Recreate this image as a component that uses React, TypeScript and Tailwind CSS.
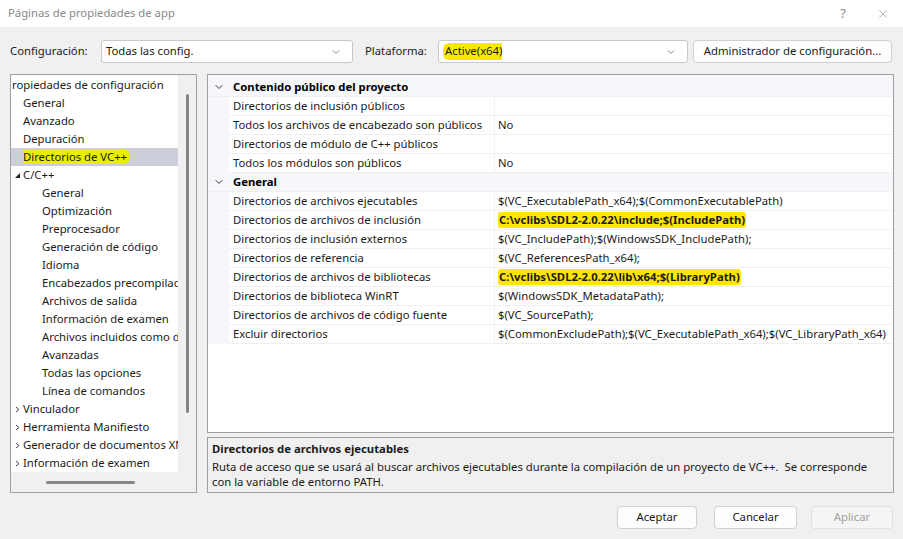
import { ChevronDown, X } from "lucide-react";

const font = { fontFamily: '"Noto Sans", "Open Sans", sans-serif' };

type Row = { name: string; value?: string; mark?: boolean };

const publicRows: Row[] = [
  { name: "Directorios de inclusión públicos" },
  { name: "Todos los archivos de encabezado son públicos", value: "No" },
  { name: "Directorios de módulo de C++ públicos" },
  { name: "Todos los módulos son públicos", value: "No" },
];

const generalRows: Row[] = [
  { name: "Directorios de archivos ejecutables", value: "$(VC_ExecutablePath_x64);$(CommonExecutablePath)" },
  { name: "Directorios de archivos de inclusión", value: "C:\\vclibs\\SDL2-2.0.22\\include;$(IncludePath)", mark: true },
  { name: "Directorios de inclusión externos", value: "$(VC_IncludePath);$(WindowsSDK_IncludePath);" },
  { name: "Directorios de referencia", value: "$(VC_ReferencesPath_x64);" },
  { name: "Directorios de archivos de bibliotecas", value: "C:\\vclibs\\SDL2-2.0.22\\lib\\x64;$(LibraryPath)", mark: true },
  { name: "Directorios de biblioteca WinRT", value: "$(WindowsSDK_MetadataPath);" },
  { name: "Directorios de archivos de código fuente", value: "$(VC_SourcePath);" },
  { name: "Excluir directorios", value: "$(CommonExcludePath);$(VC_ExecutablePath_x64);$(VC_LibraryPath_x64)" },
];

const tree: { label: string; level: number; icon?: "open" | "closed"; selected?: boolean }[] = [
  { label: "ropiedades de configuración", level: 0 },
  { label: "General", level: 1 },
  { label: "Avanzado", level: 1 },
  { label: "Depuración", level: 1 },
  { label: "Directorios de VC++", level: 1, selected: true },
  { label: "C/C++", level: 1, icon: "open" },
  { label: "General", level: 2 },
  { label: "Optimización", level: 2 },
  { label: "Preprocesador", level: 2 },
  { label: "Generación de código", level: 2 },
  { label: "Idioma", level: 2 },
  { label: "Encabezados precompilados", level: 2 },
  { label: "Archivos de salida", level: 2 },
  { label: "Información de examen", level: 2 },
  { label: "Archivos incluidos como dependencias", level: 2 },
  { label: "Avanzadas", level: 2 },
  { label: "Todas las opciones", level: 2 },
  { label: "Línea de comandos", level: 2 },
  { label: "Vinculador", level: 1, icon: "closed" },
  { label: "Herramienta Manifiesto", level: 1, icon: "closed" },
  { label: "Generador de documentos XML", level: 1, icon: "closed" },
  { label: "Información de examen", level: 1, icon: "closed" },
];

function Select({ value, width, mark }: { value: string; width: string; mark?: boolean }) {
  return (
    <div className={`${width} h-[23px] bg-white border border-[#c8c8c8] rounded-[3px] flex items-center justify-between pl-[4px] pr-[10px]`}>
      <span className={mark ? "bg-[#f7ea00] pl-[2px] rounded-l-[6px]" : ""}>{value}</span>
      <ChevronDown className="w-[12px] h-[12px] text-[#606060]" strokeWidth={1.5} />
    </div>
  );
}

function Category({ title }: { title: string }) {
  return (
    <div className="flex h-[19px] bg-[#f5f7fa] items-center border-b border-[#f0f0f0]">
      <div className="w-[21px] flex justify-center">
        <ChevronDown className="w-[12px] h-[12px] text-[#333]" strokeWidth={2} />
      </div>
      <span className="pl-[4px] font-bold text-black">{title}</span>
    </div>
  );
}

function PropRow({ row }: { row: Row }) {
  return (
    <div className="flex h-[19px]">
      <div className="w-[21px] bg-[#f5f7fa]" />
      <div className="w-[266px] bg-white border-b border-r border-[#f0f0f0] pl-[4px] flex items-center whitespace-nowrap overflow-hidden">
        {row.name}
      </div>
      <div className="flex-1 bg-white border-b border-[#f0f0f0] pl-[3px] flex items-center whitespace-nowrap overflow-hidden">
        {row.mark ? (
          <span className="bg-[#ffe600] font-bold px-[1px] rounded-[3px]">{row.value}</span>
        ) : (
          row.value
        )}
      </div>
    </div>
  );
}

export default function App() {
  return (
    <div className="w-[903px] h-[539px] bg-[#f0f0f0] flex flex-col text-[11.3px] text-[#1a1a1a] overflow-hidden" style={font}>
      {/* Title bar */}
      <div className="h-[27px] bg-white flex items-center justify-between pl-[8px] pr-[13px]">
        <span className="text-[#8a8a8a]">Páginas de propiedades de app</span>
        <div className="flex items-center gap-[30px] text-[#8a8a8a]">
          <span className="text-[13px]">?</span>
          <X className="w-[14px] h-[14px]" strokeWidth={1} />
        </div>
      </div>

      {/* Configuration row */}
      <div className="flex items-center mt-[13px] pl-[10px] h-[23px]">
        <span className="w-[91px]">Configuración:</span>
        <Select value="Todas las config." width="w-[252px]" />
        <span className="ml-[12px] w-[73px]">Plataforma:</span>
        <Select value="Active(x64)" width="w-[250px]" mark />
        <button className="ml-[5px] w-[199px] h-[23px] bg-[#fdfdfd] border border-[#d0d0d0] rounded-[4px] text-center">
          Administrador de configuración...
        </button>
      </div>

      {/* Main area */}
      <div className="flex mt-[11px] ml-[10px] gap-[10px] h-[419px]">
        {/* Tree */}
        <div className="w-[187px] border border-[#a0a0a0] bg-white flex flex-col">
          <div className="flex flex-1 min-h-0">
            <div className="w-[167px] overflow-hidden pt-[1px]">
              {tree.map((t, i) => (
                <div
                  key={i}
                  className={`h-[18px] flex items-center whitespace-nowrap ${t.selected ? "bg-[#ccceda]" : ""}`}
                >
                  <div className="w-[12px] flex justify-center shrink-0">
                    {t.icon === "open" && (
                      <svg width="5" height="5" viewBox="0 0 5 5"><polygon points="5,0 5,5 0,5" fill="#222" /></svg>
                    )}
                    {t.icon === "closed" && (
                      <svg width="5" height="7" viewBox="0 0 5 7"><polyline points="1,1 4,3.5 1,6" fill="none" stroke="#444" strokeWidth="1" /></svg>
                    )}
                  </div>
                  <span className={t.level === 0 ? "-ml-[11px]" : t.level === 1 ? "" : "pl-[19px]"}>
                    {t.selected ? <span className="bg-[#e8ee00] pr-[3px] rounded-r-[6px]">{t.label}</span> : t.label}
                  </span>
                </div>
              ))}
            </div>
            <div className="w-[18px] bg-[#f0f0f0] flex justify-center pt-[19px]">
              <div className="w-[3px] h-[319px] bg-[#858585] rounded-full" />
            </div>
          </div>
          <div className="h-[20px] bg-[#f0f0f0] flex items-center pl-[35px]">
            <div className="w-[89px] h-[3px] bg-[#858585] rounded-full" />
          </div>
        </div>

        {/* Property grid + description */}
        <div className="w-[687px] flex flex-col gap-[4px]">
          <div className="h-[360px] border border-[#a0a0a0] flex flex-col pt-[3px] bg-[#f5f7fa]">
            <Category title="Contenido público del proyecto" />
            {publicRows.map((r, i) => <PropRow key={i} row={r} />)}
            <Category title="General" />
            {generalRows.map((r, i) => <PropRow key={i} row={r} />)}
            <div className="flex-1 bg-white" />
          </div>
          <div className="h-[56px] border border-[#a0a0a0] bg-[#f0f0f0] px-[4px] pt-[3px] leading-[15px]">
            <div className="font-bold">Directorios de archivos ejecutables</div>
            <div className="mt-[3px] text-[11.3px]">
              Ruta de acceso que se usará al buscar archivos ejecutables durante la compilación de un proyecto de VC++.&nbsp; Se corresponde con la variable de entorno PATH.
            </div>
          </div>
        </div>
      </div>

      {/* Buttons */}
      <div className="flex justify-end mt-[13px] pr-[10px]">
        <button className="w-[80px] h-[23px] bg-[#fdfdfd] border border-[#d0d0d0] rounded-[4px]">Aceptar</button>
        <button className="ml-[17px] w-[83px] h-[23px] bg-[#fdfdfd] border border-[#d0d0d0] rounded-[4px]">Cancelar</button>
        <button className="ml-[14px] w-[82px] h-[23px] bg-[#f5f5f5] border border-[#e0e0e0] rounded-[4px] text-[#a0a0a0]">Aplicar</button>
      </div>
    </div>
  );
}
